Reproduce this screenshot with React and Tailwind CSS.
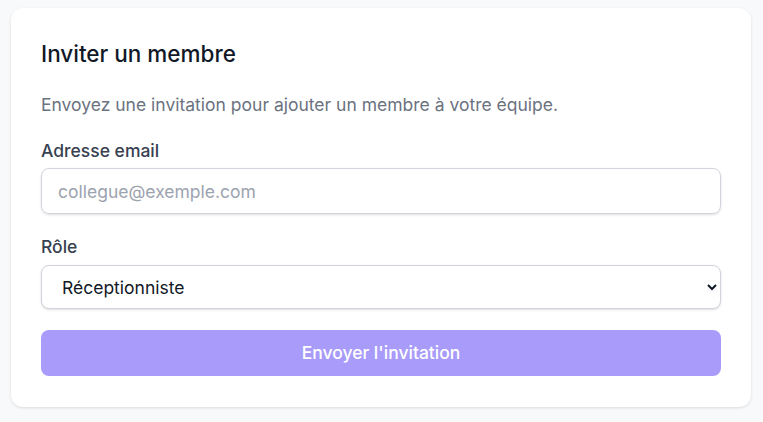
const App = () => {
  return (
    <div className="min-h-[422px] bg-[#f8f9fb] pt-2 font-['Inter',sans-serif]">
      <div className="ml-[11px] w-[740px] rounded-xl bg-white px-[30px] pt-[30px] pb-[31px] shadow-[0_1px_3px_rgba(0,0,0,0.12)]">
        <h2 className="mb-[23px] text-[22.5px] leading-8 font-medium text-[#111827]">
          Inviter un membre
        </h2>
        <p className="mb-[22px] text-[17.5px] leading-6 text-[#6b7280]">
          Envoyez une invitation pour ajouter un membre à votre équipe.
        </p>
        <form className="flex flex-col">
          <label htmlFor="email" className="mb-[5px] block text-[17.5px] leading-6 font-medium text-[#374151]">
            Adresse email
          </label>
          <input
            id="email"
            type="email"
            placeholder="collegue@exemple.com"
            className="h-[46px] w-full rounded-lg border border-[#d1d5db] px-4 text-[17.5px] text-[#111827] shadow-sm outline-none placeholder:text-[#9ca3af]"
          />
          <label htmlFor="role" className="mt-[21px] mb-1.5 block text-[17.5px] leading-6 font-medium text-[#374151]">
            Rôle
          </label>
          <select
            id="role"
            defaultValue="receptionniste"
            className="h-[44px] w-full rounded-lg border border-[#d1d5db] bg-white px-4 text-[17.5px] text-[#111827] shadow-sm outline-none"
          >
            <option value="receptionniste">Réceptionniste</option>
            <option value="praticien">Praticien</option>
            <option value="admin">Administrateur</option>
          </select>
          <button
            type="button"
            className="mt-[21px] h-[46px] w-full rounded-lg bg-[#a89bfa] text-[17.5px] font-medium text-white"
          >
            Envoyer l'invitation
          </button>
        </form>
      </div>
    </div>
  );
};

export default App;
